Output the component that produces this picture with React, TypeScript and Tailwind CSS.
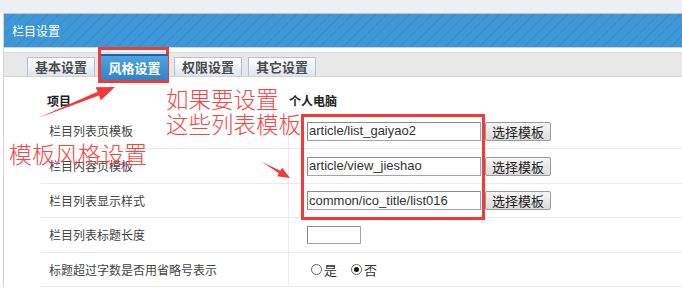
const rows = [
  { label: "栏目列表页模板", h: "h-[35px]", kind: "tpl", value: "article/list_gaiyao2" },
  { label: "栏目内容页模板", h: "h-[35px]", kind: "tpl", value: "article/view_jieshao" },
  { label: "栏目列表显示样式", h: "h-[34px]", kind: "tpl", value: "common/ico_title/list016" },
  { label: "栏目列表标题长度", h: "h-[35px]", kind: "short", value: "" },
  { label: "标题超过字数是否用省略号表示", h: "h-[34px]", kind: "radio", value: "" },
];

const tabs = ["基本设置", "风格设置", "权限设置", "其它设置"];

function Radio({ checked, text }: { checked?: boolean; text: string }) {
  return (
    <span className="flex items-center gap-[2px]">
      <span className="flex h-[11px] w-[11px] items-center justify-center rounded-full border border-[#666] bg-white">
        {checked && <span className="h-[5px] w-[5px] rounded-full bg-[#111]" />}
      </span>
      <span>{text}</span>
    </span>
  );
}

function Row({ row }: { row: (typeof rows)[number] }) {
  return (
    <div className={`flex ${row.h} border-b border-[#ebebeb]`}>
      <div className="flex w-[247px] items-center pl-[8px] text-[#444]">{row.label}</div>
      <div className="flex flex-1 items-center border-l border-[#ebebeb] pl-[18px]">
        {row.kind === "tpl" && (
          <>
            <div className="flex h-[19px] w-[174px] items-center border border-[#a5a5a5] border-t-[#8a8a8a] border-l-[#8a8a8a] bg-white pl-[1px] font-['Liberation_Sans',Arial,sans-serif] text-[13px] text-[#333]">
              {row.value}
            </div>
            <button className="ml-[4px] flex h-[19px] w-[66px] items-center justify-center rounded-[2px] border border-[#9a9a9a] bg-[linear-gradient(#f6f6f6,#dcdcdc)] text-[13px] leading-none text-[#222]">
              选择模板
            </button>
          </>
        )}
        {row.kind === "short" && (
          <div className="h-[18px] w-[54px] border border-[#a5a5a5] border-t-[#8a8a8a] border-l-[#8a8a8a] bg-white" />
        )}
        {row.kind === "radio" && (
          <div className="ml-[4px] flex items-center gap-[14px] text-[13px] text-[#333]">
            <Radio text="是" />
            <Radio checked text="否" />
          </div>
        )}
      </div>
    </div>
  );
}

export default function App() {
  return (
    <div className="relative h-[288px] w-[682px] overflow-hidden bg-white font-['Noto_Sans_CJK_SC',sans-serif] text-[12px]">
      <div className="h-[13px] bg-[#eff0f5]" />
      <div className="ml-[3px] border-l border-[#cfd3da]">
        <div className="flex h-[34px] items-center border-t border-[#b9c5d8] bg-[repeating-linear-gradient(135deg,#3e97d6_0px,#3e97d6_6px,#3891d0_6px,#3891d0_8px)] pl-[8px] text-[12px] text-white">
          栏目设置
        </div>
        <div className="h-[1px] bg-[#c9d1dc]" />
        <div className="h-[4px] bg-white" />
        <div className="flex h-[25px] items-end gap-[6px] border-t border-b border-t-[#dcdcdc] border-b-[#d2d2d2] bg-[#e8e8e8] pl-[23px]">
          {tabs.map((t, i) =>
            i === 1 ? (
              <div
                key={t}
                className="relative z-10 -mb-[4px] flex h-[26px] w-[67px] items-center justify-center border-t-2 border-[#1f63a8] bg-[linear-gradient(#4fa3e2,#2f84c8)] font-bold text-[13px] text-white"
              >
                {t}
              </div>
            ) : (
              <div
                key={t}
                className="flex h-[19px] w-[68px] items-center justify-center border border-b-0 border-[#b3c2d2] bg-[linear-gradient(#ffffff,#dde6f0)] font-bold text-[13px] text-[#4a4a4a]"
              >
                {t}
              </div>
            )
          )}
        </div>
        <div className="pl-[37px] pt-[10px]">
          <div className="flex h-[27px] items-center font-bold text-[#222]">
            <div className="w-[248px] pl-[6px]">项目</div>
            <div>个人电脑</div>
          </div>
          {rows.map((r) => (
            <Row key={r.label} row={r} />
          ))}
        </div>
      </div>

      {/* red annotations */}
      <div className="absolute left-[98px] top-[47px] h-[36px] w-[71px] border-[3px] border-[#f23a3a]" />
      <div className="absolute left-[301px] top-[114px] h-[106px] w-[184px] border-[3px] border-[#f23a3a]" />
      <div className="absolute left-[166px] top-[86px] text-[22.5px] font-light leading-[25px] text-[#f84444]">
        <div>如果要设置</div>
        <div>这些列表模板</div>
      </div>
      <div className="absolute left-[9px] top-[139px] text-[23px] font-light leading-[28px] text-[#f84444]">模板风格设置</div>
      <svg className="absolute left-0 top-0" width="682" height="288" viewBox="0 0 682 288">
        <polygon points="38,118 97.6,91.8 95.7,87.2 115,87 100.9,100.2 99,95.6" fill="#f23a3a" />
        <polygon points="262,162 280.3,170.7 282.1,167.7 290,178 277.1,176.3 278.9,173.3" fill="#f23a3a" />
      </svg>
    </div>
  );
}
